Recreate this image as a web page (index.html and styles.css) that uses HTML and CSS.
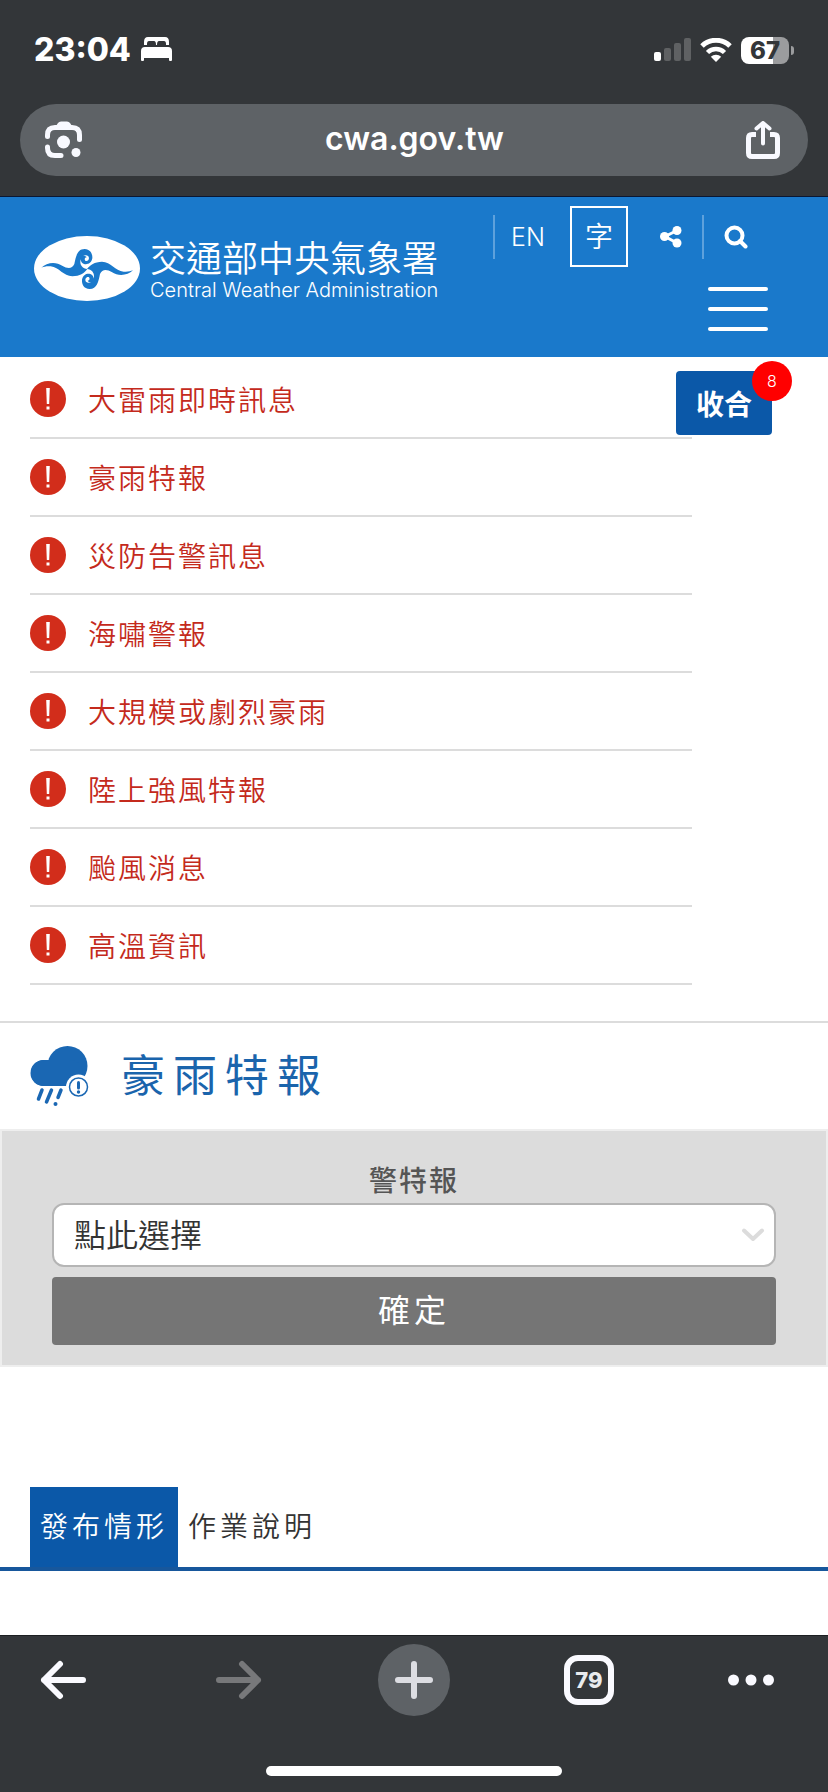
FILE: index.html
```html
<!DOCTYPE html>
<html lang="zh-Hant">
<head>
    <meta charset="UTF-8">
    <meta name="viewport" content="width=device-width, initial-scale=1.0">
    <title>豪雨特報</title>
    <link rel="stylesheet" href="styles.css">
</head>
<body>
    <div class="browser-top">
        <div class="status-bar">
            <div class="status-left">
                <span class="time">23:04</span>
                <svg class="bed-icon" width="32" height="26" viewBox="0 0 32 26" fill="#fff">
                    <path d="M3 8V5Q3 0 7 0H24Q28 0 28 5V8H25V7Q25 4 23 4H18Q16 4 16 8H15Q15 4 13 4H8Q6 4 6 7V8Z"/>
                    <path d="M0 14Q0 10 4 10H27Q31 10 31 14V23Q31 24 30 24H29Q28 24 28 23V21H3V23Q3 24 2 24H1Q0 24 0 23Z"/>
                </svg>
            </div>
            <div class="status-right">
                <svg width="37" height="24" viewBox="0 0 37 24" fill="#5f6163">
                    <rect x="0" y="14" width="7" height="9" rx="2" fill="#fff"/>
                    <rect x="10" y="10" width="7" height="13" rx="2"/>
                    <rect x="20" y="5" width="7" height="18" rx="2"/>
                    <rect x="30" y="0" width="7" height="23" rx="2"/>
                </svg>
                <svg width="32" height="24" viewBox="0 0 32 24" fill="none" stroke="#fff" stroke-width="5">
                    <path d="M2 8A20 20 0 0 1 30 8"/>
                    <path d="M7.500 14.500A12 12 0 0 1 24.500 14.500" stroke-width="4.500"/>
                    <path d="M16 24L10.800 18.800A7.400 7.400 0 0 1 21.200 18.800Z" fill="#fff" stroke="none"/>
                </svg>
                <div class="battery"><span>67</span></div>
            </div>
        </div>
        <div class="address-bar">
            <button class="icon-button" aria-label="Lens">
                <svg width="38" height="38" viewBox="0 0 38 38" fill="none" stroke="#f8f9ff" stroke-width="5" stroke-linecap="round">
                    <path d="M2.500 15.500V14Q2.500 6.500 10 6.500H27Q34.500 6.500 34.500 14V18.500"/>
                    <path d="M2.500 26V27Q2.500 34.500 10 34.500H16"/>
                    <path d="M10 6.500L13 2Q14 .5 16 .5H22Q24 .5 25 2L28 6.500Z" fill="#f8f9ff" stroke="none"/>
                    <circle cx="18.500" cy="21" r="6.500" fill="#f8f9ff" stroke="none"/>
                    <circle cx="31" cy="31.500" r="4.500" fill="#f8f9ff" stroke="none"/>
                </svg>
            </button>
            <span class="url">cwa.gov.tw</span>
            <button class="icon-button" aria-label="Share">
                <svg width="34" height="38" viewBox="0 0 34 38" fill="none" stroke="#f8f9ff" stroke-width="4" stroke-linecap="round" stroke-linejoin="round">
                    <path d="M10 13.500H6Q2.500 13.500 2.500 17V32Q2.500 35.500 6 35.500H28Q31.500 35.500 31.500 32V17Q31.500 13.500 28 13.500H24" stroke-width="5" stroke-linecap="butt"/>
                    <path d="M17 22.500V3M10.500 7.500L17 2L23.500 7.500"/>
                </svg>
            </button>
        </div>
    </div>

    <header class="site-header">
        <a class="logo" href="#">
            <svg width="106" height="65" viewBox="0 0 318 195">
                <ellipse cx="159" cy="97.500" rx="159" ry="97.500" fill="#fff"/>
                <g id="wave" fill="#1a79cb">
                    <path d="M22 95C38 80 64 75 86 90C98 97 114 101 121 84C126 60 130 39 152 39C170 40 176 54 175 67C172 82 160 87 150 84C137 79 138 63 149 60C153 59 157 61 158 64C152 64 150 71 155 75C162 77 168 69 163 61C153 52 139 64 139 78C139 88 146 98 160 99C150 112 138 120 115 121C88 121 76 94 50 91C38 90 30 92 22 95Z"/>
                </g>
                <use href="#wave" transform="rotate(180 159.500 99)"/>
            </svg>
            <span class="logo-text">
                <span class="logo-zh">交通部中央氣象署</span>
                <span class="logo-en">Central Weather Administration</span>
            </span>
        </a>
        <div class="header-right">
            <nav class="tools">
                <a class="lang" href="#">EN</a>
                <button class="font-size">字</button>
                <button class="share" aria-label="分享">
                    <svg width="22" height="22" viewBox="0 0 22 22" fill="#fff">
                        <path d="M17 4.500L5 10.500L17 17" fill="none" stroke="#fff" stroke-width="3"/>
                        <circle cx="17" cy="4.500" r="4.500"/>
                        <circle cx="4.500" cy="10.500" r="4.500"/>
                        <circle cx="17" cy="17" r="4.500"/>
                    </svg>
                </button>
                <button class="search" aria-label="搜尋">
                    <svg width="24" height="24" viewBox="0 0 24 24" fill="none" stroke="#fff" stroke-width="4">
                        <circle cx="10.500" cy="10.500" r="8"/>
                        <path d="M16 16L21.500 21.500" stroke-linecap="round"/>
                    </svg>
                </button>
            </nav>
            <button class="menu-button" aria-label="選單"><i></i><i></i><i></i></button>
        </div>
    </header>

    <main>
        <section class="warnings">
            <ul class="warning-list">
                <li><a href="#"><svg class="alert-icon" viewBox="0 0 36 36"><circle cx="18" cy="18" r="18" fill="#d22d1b"/><path d="M16.200 7H19.800L19.200 23H16.800ZM16.500 25.500H19.500V28.500H16.500Z" fill="#fff"/></svg>大雷雨即時訊息</a></li>
                <li><a href="#"><svg class="alert-icon" viewBox="0 0 36 36"><circle cx="18" cy="18" r="18" fill="#d22d1b"/><path d="M16.200 7H19.800L19.200 23H16.800ZM16.500 25.500H19.500V28.500H16.500Z" fill="#fff"/></svg>豪雨特報</a></li>
                <li><a href="#"><svg class="alert-icon" viewBox="0 0 36 36"><circle cx="18" cy="18" r="18" fill="#d22d1b"/><path d="M16.200 7H19.800L19.200 23H16.800ZM16.500 25.500H19.500V28.500H16.500Z" fill="#fff"/></svg>災防告警訊息</a></li>
                <li><a href="#"><svg class="alert-icon" viewBox="0 0 36 36"><circle cx="18" cy="18" r="18" fill="#d22d1b"/><path d="M16.200 7H19.800L19.200 23H16.800ZM16.500 25.500H19.500V28.500H16.500Z" fill="#fff"/></svg>海嘯警報</a></li>
                <li><a href="#"><svg class="alert-icon" viewBox="0 0 36 36"><circle cx="18" cy="18" r="18" fill="#d22d1b"/><path d="M16.200 7H19.800L19.200 23H16.800ZM16.500 25.500H19.500V28.500H16.500Z" fill="#fff"/></svg>大規模或劇烈豪雨</a></li>
                <li><a href="#"><svg class="alert-icon" viewBox="0 0 36 36"><circle cx="18" cy="18" r="18" fill="#d22d1b"/><path d="M16.200 7H19.800L19.200 23H16.800ZM16.500 25.500H19.500V28.500H16.500Z" fill="#fff"/></svg>陸上強風特報</a></li>
                <li><a href="#"><svg class="alert-icon" viewBox="0 0 36 36"><circle cx="18" cy="18" r="18" fill="#d22d1b"/><path d="M16.200 7H19.800L19.200 23H16.800ZM16.500 25.500H19.500V28.500H16.500Z" fill="#fff"/></svg>颱風消息</a></li>
                <li><a href="#"><svg class="alert-icon" viewBox="0 0 36 36"><circle cx="18" cy="18" r="18" fill="#d22d1b"/><path d="M16.200 7H19.800L19.200 23H16.800ZM16.500 25.500H19.500V28.500H16.500Z" fill="#fff"/></svg>高溫資訊</a></li>
            </ul>
            <button class="collapse-button">收合<span class="badge">8</span></button>
        </section>

        <div class="page-title">
            <svg width="60" height="60" viewBox="0 0 60 60">
                <g fill="#1a67b3">
                    <circle cx="37.500" cy="20" r="20"/>
                    <circle cx="13.500" cy="27" r="13"/>
                    <rect x="1" y="14" width="52" height="26" rx="13"/>
                </g>
                <g stroke="#1a67b3" stroke-width="3.500" stroke-linecap="round">
                    <path d="M12 44L8.500 53M21.500 44L16.500 56M31 44L28 51.500"/>
                </g>
                <circle cx="25.500" cy="58" r="2" fill="#1a67b3"/>
                <circle cx="48.500" cy="41" r="12.500" fill="#fff"/>
                <circle cx="48.500" cy="41" r="9" fill="#fff" stroke="#1a67b3" stroke-width="1.500"/>
                <path d="M48.500 36.500V42" stroke="#1a67b3" stroke-width="3" stroke-linecap="round"/>
                <circle cx="48.500" cy="46" r="1.700" fill="#1a67b3"/>
            </svg>
            <h1>豪雨特報</h1>
        </div>

        <form class="filter">
            <label for="warning-type">警特報</label>
            <div class="select-box">
                <select id="warning-type">
                    <option>點此選擇</option>
                </select>
                <svg class="chevron" width="24" height="14" viewBox="0 0 24 14" fill="none" stroke="#dcdcdc" stroke-width="4" stroke-linecap="round" stroke-linejoin="round">
                    <path d="M3 2.500L12 11L21 2.500"/>
                </svg>
            </div>
            <button class="submit-button" type="button">確定</button>
        </form>

        <nav class="tabs">
            <a class="tab active" href="#">發布情形</a>
            <a class="tab" href="#">作業說明</a>
        </nav>
    </main>

    <footer class="browser-bottom">
        <div class="toolbar">
            <button aria-label="Back">
                <svg width="48" height="40" viewBox="0 0 48 40" fill="none" stroke="#fafaff" stroke-width="6" stroke-linecap="round" stroke-linejoin="round">
                    <path d="M43 20H4M20 4L4 20L20 36"/>
                </svg>
            </button>
            <button aria-label="Forward" disabled>
                <svg width="48" height="40" viewBox="0 0 48 40" fill="none" stroke="#77787a" stroke-width="6" stroke-linecap="round" stroke-linejoin="round">
                    <path d="M4 20H43M27 4L43 20L27 36"/>
                </svg>
            </button>
            <button class="new-tab" aria-label="New tab">
                <svg width="40" height="40" viewBox="0 0 40 40" stroke="#dcdde2" stroke-width="6" stroke-linecap="round">
                    <path d="M4 20H36M20 4V36"/>
                </svg>
            </button>
            <button><span class="tab-count">79</span></button>
            <button class="more" aria-label="More">
                <svg width="46" height="12" viewBox="0 0 46 12" fill="#fafaff">
                    <circle cx="5.500" cy="6" r="5.500"/>
                    <circle cx="23" cy="6" r="5.500"/>
                    <circle cx="40.500" cy="6" r="5.500"/>
                </svg>
            </button>
        </div>
        <div class="home-indicator"></div>
    </footer>
</body>
</html>
```
FILE: styles.css
```css
* {
    box-sizing: border-box;
}
body {
    margin: 0;
    min-height: 100vh;
    display: flex;
    flex-direction: column;
    background-color: #fff;
    font-family: Inter, "Noto Sans CJK TC", sans-serif;
    color: #333;
}
button {
    display: flex;
    align-items: center;
    justify-content: center;
    margin: 0;
    padding: 0;
    border: none;
    background: none;
    color: #fff;
    font-family: inherit;
}
a {
    color: inherit;
    text-decoration: none;
}
svg {
    display: block;
    flex: none;
}

/* browser chrome, top */
.browser-top {
    background-color: #333639;
    border-bottom: 1px solid #0a1733;
    padding: 30px 20px 20px;
}
.status-bar {
    display: flex;
    justify-content: space-between;
    align-items: center;
    height: 40px;
    margin-bottom: 34px;
    padding: 0 19px 0 14px;
}
.status-left {
    display: flex;
    align-items: center;
    gap: 10px;
}
.time {
    font-size: 32px;
    font-weight: 800;
    line-height: 40px;
    color: #fff;
}
.status-right {
    display: flex;
    align-items: center;
    gap: 9px;
}
.battery {
    position: relative;
    width: 48px;
    height: 27px;
    border-radius: 8px;
    background: linear-gradient(to right, #fff 67%, #9b9c9e 67%);
    color: #333639;
    font-size: 24px;
    font-weight: 800;
    line-height: 27px;
    text-align: center;
}
.battery::after {
    content: "";
    position: absolute;
    right: -5px;
    top: 9px;
    width: 3px;
    height: 9px;
    border-radius: 0 3px 3px 0;
    background-color: #9b9c9e;
}
.address-bar {
    display: flex;
    justify-content: space-between;
    align-items: center;
    height: 72px;
    padding: 0 28px 0 25px;
    border-radius: 36px;
    background-color: #5e6266;
}
.url {
    padding-bottom: 4px;
    font-size: 32px;
    font-weight: 600;
    color: #fff;
}

/* site header */
.site-header {
    display: flex;
    justify-content: space-between;
    padding: 9px 60px 26px 34px;
    background-color: #1a79cb;
    color: #fff;
}
.logo {
    display: flex;
    align-items: center;
    gap: 10px;
}
.logo-text {
    display: flex;
    flex-direction: column;
    padding-top: 4px;
}
.logo-zh {
    font-size: 36px;
    font-weight: 350;
    line-height: 38px;
}
.logo-en {
    font-size: 20px;
    font-weight: 300;
    line-height: 24px;
}
.header-right {
    display: flex;
    flex-direction: column;
    align-items: flex-end;
    gap: 20px;
}
.tools {
    display: flex;
    align-items: center;
}
.lang {
    width: 77px;
    padding-left: 16px;
    border-left: 2px solid #5ea1dc;
    font-size: 25px;
    font-weight: 300;
    line-height: 44px;
}
.font-size {
    width: 58px;
    height: 61px;
    padding-bottom: 4px;
    border: 2px solid #fff;
    font-size: 28px;
    font-weight: 350;
}
.share {
    width: 74px;
    height: 44px;
    padding-left: 12px;
}
.search {
    width: 66px;
    height: 44px;
    border-left: 2px solid #5ea1dc;
}
.menu-button {
    flex-direction: column;
    justify-content: space-between;
    width: 60px;
    height: 44px;
}
.menu-button i {
    width: 100%;
    height: 4px;
    border-radius: 2px;
    background-color: #fff;
}

/* warning list */
.warnings {
    display: flex;
    align-items: flex-start;
    padding: 4px 56px 36px 30px;
    border-bottom: 2px solid #dcdcdc;
}
.warning-list {
    flex: 1;
    margin: 0 -16px 0 0;
    padding: 0;
    list-style: none;
}
.warning-list li {
    height: 78px;
    border-bottom: 2px solid #dcdcdc;
}
.warning-list a {
    display: flex;
    align-items: center;
    gap: 22px;
    height: 76px;
    color: #c42a1c;
    font-size: 28px;
    font-weight: 350;
    letter-spacing: 2px;
}
.alert-icon {
    width: 36px;
    height: 36px;
}
.collapse-button {
    position: relative;
    width: 96px;
    height: 64px;
    margin-top: 10px;
    border-radius: 4px;
    background-color: #0b58a8;
    font-size: 28px;
    font-weight: 700;
}
.badge {
    position: absolute;
    top: -10px;
    right: -20px;
    width: 40px;
    height: 40px;
    border-radius: 50%;
    background-color: #f00;
    font-size: 16px;
    font-weight: 300;
    line-height: 40px;
}

/* title */
.page-title {
    display: flex;
    align-items: center;
    gap: 31px;
    height: 106px;
    padding-left: 30px;
}
.page-title h1 {
    margin: 0;
    color: #1a64ac;
    font-size: 44px;
    font-weight: 400;
    line-height: 60px;
    letter-spacing: 8px;
}

/* filter form */
.filter {
    padding: 28px 50px 20px;
    border: 2px solid #eee;
    background-color: #dcdcdc;
}
.filter label {
    display: block;
    color: #555;
    font-size: 28px;
    font-weight: 500;
    line-height: 44px;
    letter-spacing: 2px;
    text-align: center;
}
.select-box {
    position: relative;
    margin-bottom: 10px;
}
.select-box select {
    display: block;
    width: 100%;
    height: 64px;
    padding: 0 20px;
    border: 2px solid #b5b5b5;
    border-radius: 12px;
    background-color: #fff;
    color: #333;
    font-family: inherit;
    font-size: 32px;
    font-weight: 350;
    appearance: none;
}
.chevron {
    position: absolute;
    right: 11px;
    top: 25px;
    pointer-events: none;
}
.submit-button {
    width: 100%;
    height: 68px;
    padding-bottom: 6px;
    border-radius: 4px;
    background-color: #757575;
    font-size: 32px;
    letter-spacing: 4px;
}

/* tabs */
.tabs {
    display: flex;
    margin-top: 120px;
    padding-left: 30px;
    border-bottom: 4px solid #17579c;
}
.tab {
    padding: 0 10px;
    font-size: 28px;
    font-weight: 350;
    line-height: 80px;
    letter-spacing: 4px;
}
.tab.active {
    background-color: #0b58a8;
    color: #fff;
}

/* browser chrome, bottom */
.browser-bottom {
    margin-top: auto;
    padding: 8px 28px 16px;
    border-top: 1px solid #1c1f22;
    background-color: #333639;
}
.toolbar {
    display: flex;
    justify-content: space-between;
    align-items: center;
    margin-bottom: 50px;
}
.toolbar button {
    width: 72px;
    height: 72px;
}
.toolbar .new-tab {
    border-radius: 50%;
    background-color: #5e6266;
}
.toolbar .more {
    justify-content: flex-start;
}
.tab-count {
    width: 50px;
    height: 50px;
    border: 6px solid #fafaff;
    border-radius: 14px;
    color: #e8eaed;
    font-size: 22px;
    font-weight: 800;
    line-height: 38px;
}
.home-indicator {
    width: 296px;
    height: 10px;
    margin: 0 auto;
    border-radius: 5px;
    background-color: #fff;
}
```
